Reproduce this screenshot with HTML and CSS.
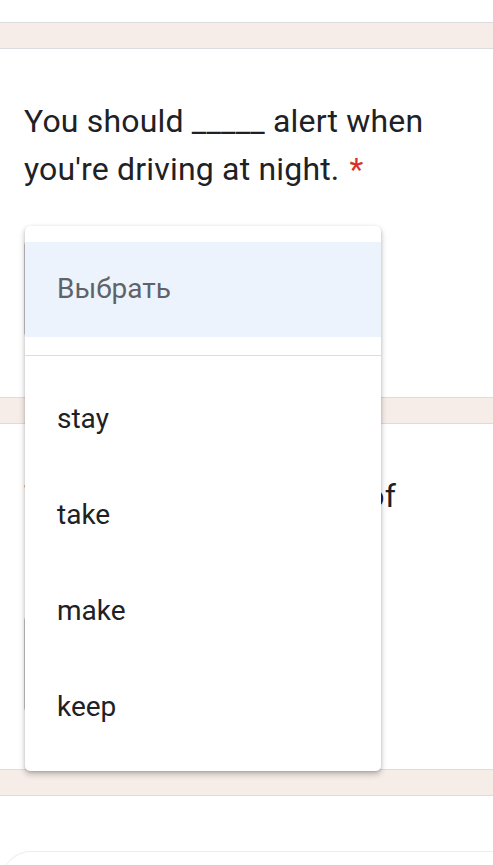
FILE: index.html
```html
<!DOCTYPE html>
<html lang="ru">
<head>
<meta charset="utf-8">
<title>Form</title>
<link rel="stylesheet" href="styles.css">
</head>
<body>
<div class="page">
  <div class="card card-top"></div>

  <div class="card question">
    <div class="title">You should _____ alert when you're driving at night.<span class="req">*</span></div>
    <div class="select">
      <div class="menu">
        <div class="item placeholder">Выбрать</div>
        <div class="divider"></div>
        <div class="item">stay</div>
        <div class="item">take</div>
        <div class="item">make</div>
        <div class="item">keep</div>
      </div>
    </div>
  </div>

  <div class="card question q2">
    <div class="title">Tiredness is the source of many road accidents.<span class="req">*</span></div>
    <div class="select"></div>
  </div>

  <div class="card card-next">
    <div class="next-box"></div>
  </div>
</div>
</body>
</html>
```
FILE: styles.css
```css
html, body {
  margin: 0;
  padding: 0;
}
body {
  background: #f6ece8;
  font-family: Roboto, "Liberation Sans", sans-serif;
  color: #202124;
  overflow: hidden;
}
.page {
  display: flex;
  flex-direction: column;
  gap: 25px;
}
.card {
  background: #fff;
  border-top: 1px solid #dadce0;
  border-bottom: 1px solid #dadce0;
}
.card-top {
  border-top: none;
  height: 22px;
}
.question {
  padding: 48px 24px 60px;
}
.q2 {
  padding-bottom: 57px;
}
.title {
  font-size: 32px;
  line-height: 48px;
  letter-spacing: 0.18px;
}
.req {
  color: #d93025;
  padding-left: 10px;
}
.select {
  position: relative;
  margin-top: 48px;
  width: 350px;
  height: 94px;
  border: 1px solid #c6c8cc;
  border-radius: 4px;
}
.menu {
  position: absolute;
  z-index: 10;
  top: -16px;
  left: 0px;
  width: 356px;
  background: #fff;
  border-radius: 5px;
  padding: 16px 0;
  box-shadow: 0 3px 6px rgba(0,0,0,0.24), 0 1px 3px rgba(0,0,0,0.14);
}
.item {
  height: 96px;
  display: flex;
  align-items: center;
  padding-left: 32px;
  padding-bottom: 2px;
  box-sizing: border-box;
  font-size: 28px;
  color: #202124;
}
.item.placeholder {
  height: 95px;
  background: #edf3fc;
  color: #5f6368;
}
.divider {
  height: 1px;
  background: #dadce0;
  margin: 18px 0 15px;
}
.card-next {
  border-bottom: none;
  height: 80px;
  padding-top: 55px;
  padding-left: 1px;
}
.next-box {
  height: 60px;
  border-top: 1px solid #ededed;
  border-left: 1px solid #f3f3f3;
  border-top-left-radius: 30px;
}
```
